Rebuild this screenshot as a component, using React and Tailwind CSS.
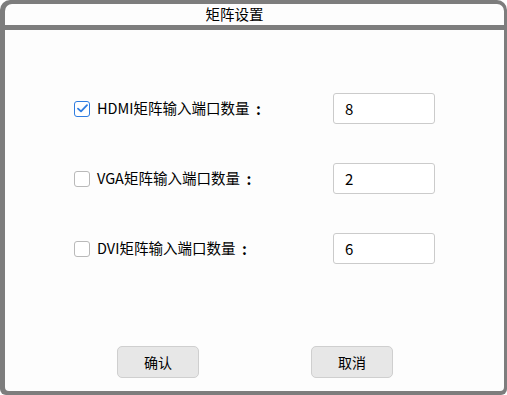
import React, { useState } from 'react';

const font = { fontFamily: '"Noto Sans CJK SC", "Noto Sans", sans-serif' };

const ports = [
  { id: 'hdmi', label: 'HDMI矩阵输入端口数量', value: '8', checked: true },
  { id: 'vga', label: 'VGA矩阵输入端口数量', value: '2', checked: false },
  { id: 'dvi', label: 'DVI矩阵输入端口数量', value: '6', checked: false },
];

const CheckBox = ({ checked, onChange }) => (
  <button
    type="button"
    onClick={onChange}
    className={`w-[16px] h-[16px] rounded-[3px] border flex items-center justify-center bg-white ${
      checked ? 'border-[#2f7de1]' : 'border-[#b9b9b9]'
    }`}
  >
    {checked && (
      <svg width="11" height="9" viewBox="0 0 11 9" fill="none">
        <path d="M1 4.6 L4 7.4 L10 1.2" stroke="#2f7de1" strokeWidth="1.8" strokeLinecap="round" strokeLinejoin="round" />
      </svg>
    )}
  </button>
);

const PortRow = ({ port, onToggle, onValue }) => (
  <div className="flex items-center h-[31px]">
    <div className="flex items-center w-[259px]">
      <CheckBox checked={port.checked} onChange={onToggle} />
      <span className="ml-[7px] text-[14.5px] text-black leading-none">{port.label}</span>
      <span className="ml-[2px] w-[14px] text-center text-[15px] font-bold text-black leading-none">:</span>
    </div>
    <input
      value={port.value}
      onChange={(e) => onValue(e.target.value)}
      className="w-[102px] h-[31px] border border-[#cbcbcb] rounded-[3px] bg-white px-[11px] text-[15px] text-black outline-none"
    />
  </div>
);

const App = () => {
  const [rows, setRows] = useState(ports);

  const update = (id, patch) =>
    setRows((prev) => prev.map((r) => (r.id === id ? { ...r, ...patch } : r)));

  return (
    <div className="w-[507px] h-[395px] bg-[#7d7d7d] rounded-t-[10px] rounded-b-[6px] pt-[4px] pl-[5px] pr-[3px] pb-[4px] flex flex-col" style={font}>
      {/* title bar */}
      <div className="h-[21px] bg-[#fdfdfd] rounded-t-[7px] flex items-center justify-center pr-[40px]">
        <span className="text-[14.5px] text-black leading-none">矩阵设置</span>
      </div>

      {/* body */}
      <div className="mt-[5px] flex-1 bg-[#fdfdfd] rounded-b-[4px] flex flex-col pl-[69px] pt-[63px]">
        <div className="flex flex-col gap-[39px]">
          {rows.map((row) => (
            <PortRow
              key={row.id}
              port={row}
              onToggle={() => update(row.id, { checked: !row.checked })}
              onValue={(v) => update(row.id, { value: v })}
            />
          ))}
        </div>

        <div className="mt-auto mb-[13px] flex gap-[112px] pl-[43px]">
          <button className="w-[82px] h-[32px] rounded-[5px] border border-[#cfcfcf] bg-[#e7e7e7] text-[14px] text-black">
            确认
          </button>
          <button className="w-[82px] h-[32px] rounded-[5px] border border-[#cfcfcf] bg-[#e7e7e7] text-[14px] text-black">
            取消
          </button>
        </div>
      </div>
    </div>
  );
};

export default App;
